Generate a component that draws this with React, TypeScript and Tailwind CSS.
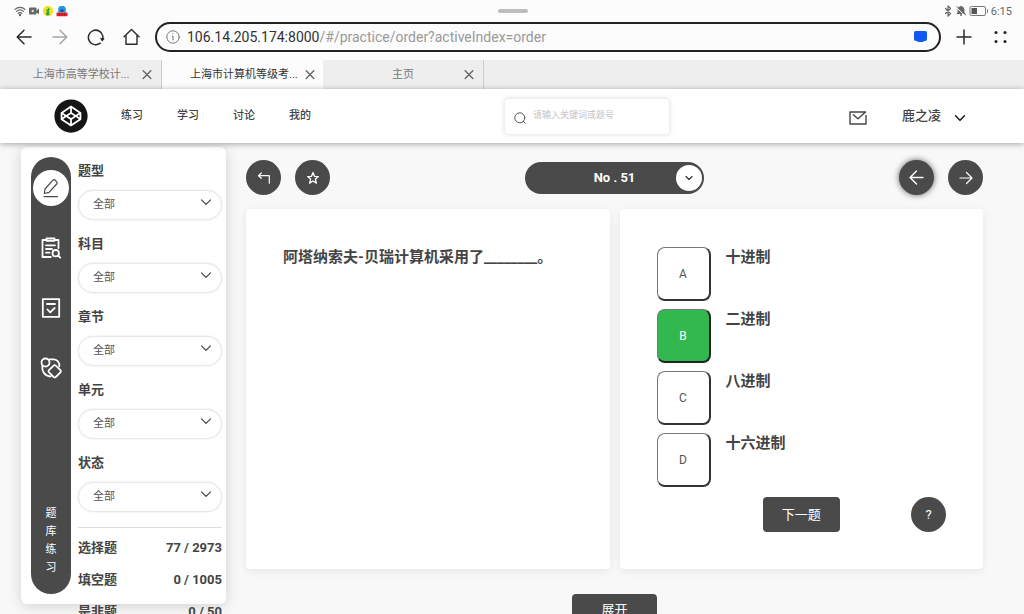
import React, { useState } from "react";
import { AiFillCodepenCircle } from "react-icons/ai";
import { BluetoothIcon } from "lucide-react";

type IconProps = { className?: string; children: React.ReactNode; box?: number; stroke?: number };

type Option = { key: string; text: string };

const tabs = [
  { title: "上海市高等学校计...", active: false },
  { title: "上海市计算机等级考...", active: true },
  { title: "主页", active: false },
];

const navItems = ["练习", "学习", "讨论", "我的"];

const filters = ["题型", "科目", "章节", "单元", "状态"];

const counts = [
  { name: "选择题", value: "77 / 2973" },
  { name: "填空题", value: "0 / 1005" },
  { name: "是非题", value: "0 / 50" },
];

const options: Option[] = [
  { key: "A", text: "十进制" },
  { key: "B", text: "二进制" },
  { key: "C", text: "八进制" },
  { key: "D", text: "十六进制" },
];

function Icon({ className, children, box = 24, stroke = 2 }: IconProps) {
  return (
    <svg
      className={className}
      viewBox={`0 0 ${box} ${box}`}
      fill="none"
      stroke="currentColor"
      strokeWidth={stroke}
      strokeLinecap="round"
      strokeLinejoin="round"
      aria-hidden="true"
    >
      {children}
    </svg>
  );
}

function Chevron({ className, stroke }: { className?: string; stroke?: number }) {
  return (
    <Icon className={className} box={12} stroke={stroke ?? 1.4}>
      <path d="M1.500 3.800 6 8.300l4.500-4.500" />
    </Icon>
  );
}

function StatusBar() {
  return (
    <div className="grid h-[22px] grid-cols-3 items-center pl-[14px] pr-3 text-[#666]">
      <div className="flex items-center gap-[2px]">
        <Icon className="h-3 w-3" box={12} stroke={1.2}>
          <path d="M1 4.4C3.8 1.8 8.2 1.8 11 4.4M2.6 6.4c2-1.8 4.800-1.800 6.800 0M4.200 8.300c1.100-.9 2.500-.9 3.600 0" />
          <circle cx="6" cy="10" r=".6" fill="currentColor" />
        </Icon>
        <svg className="h-3 w-3" viewBox="0 0 12 12" fill="#666" aria-hidden="true">
          <rect x="1" y="2.500" width="7.500" height="7" rx="1" />
          <path d="M8 6 11 3.500v5.500L8 7.500z" />
          <circle cx="4.700" cy="6" r="1.200" fill="#ddd" />
        </svg>
        <svg className="h-3 w-3" viewBox="0 0 12 12" aria-hidden="true">
          <circle cx="6" cy="6" r="5.200" fill="#f4e224" />
          <path d="M5.500 2.200 8 4.500 6.800 5.200l.5 3.200a1.700 1.700 0 1 1-1.500-1.300L3.500 5l2.600-.6z" fill="#24a148" />
        </svg>
        <svg className="h-3 w-3" viewBox="0 0 12 12" aria-hidden="true">
          <path d="M4 1h4l1.800 2v4.600H2.200V3z" fill="#2596e0" />
          <path d="M4.500 4.500h3v2.500h-3z" fill="#124f9c" />
          <rect x="0.500" y="7.400" width="11" height="3.800" rx=".6" fill="#e0202c" />
          <path d="M3 9.200h1.200M5.500 9.200h1.200M8 9.200h1.200" stroke="#7d1020" />
        </svg>
      </div>
      <span className="h-1 w-[30px] justify-self-center rounded-full bg-[#bdbdbd]" />
      <div className="flex items-center justify-end gap-px">
        <BluetoothIcon className="h-3 w-3" strokeWidth={2.5} />
        <svg className="h-3 w-3" viewBox="0 0 12 12" aria-hidden="true">
          <path d="M6 1c2 .4 3.400 1.800 3.400 3.800v2.400l1.200 1.800H1.400l1.200-1.800V4.800C2.600 2.800 4 1.400 6 1z" fill="#666" />
          <circle cx="6" cy="10" r="1" fill="#666" />
          <path d="M1 2.300 10.500 11" stroke="#fcfcfc" />
          <path d="M1.500 1.200 11 10.200" stroke="#666" />
        </svg>
        <svg className="mx-px h-[10px] w-5" viewBox="0 0 20 10" aria-hidden="true">
          <rect x="1" y=".5" width="15.500" height="9" rx="1.500" fill="none" stroke="#777" />
          <rect x="2.500" y="2" width="5.500" height="6" fill="#555" />
          <path d="M18.500 3.200v3.600" stroke="#777" />
        </svg>
        <span className="text-[11px] leading-none">6:15</span>
      </div>
    </div>
  );
}

function BrowserBar() {
  const btn = "flex h-[30px] w-9 items-center justify-center";
  return (
    <div className="flex items-center px-[6px] pb-2 text-[#2a2a2a]">
      <button type="button" aria-label="Back" className={btn}>
        <Icon className="h-4 w-4" box={16} stroke={1.500}>
          <path d="M15 8H1.500M8 1.200 1.200 8 8 14.800" />
        </Icon>
      </button>
      <button type="button" aria-label="Forward" className="flex h-[30px] w-9 items-center justify-center text-[#a5a5a5]">
        <Icon className="h-4 w-4" box={16} stroke={1.500}>
          <path d="M1 8h13.500M8 1.200 14.800 8 8 14.800" />
        </Icon>
      </button>
      <button type="button" aria-label="Reload" className={btn}>
        <Icon className="h-[18px] w-[18px]" box={18} stroke={1.500}>
          <path d="M13.200 15.200A7.300 7.300 0 1 1 15.800 7.800c.2 1.500 0 2.800-.6 4.200M16.600 10.800l-1.500 1.700-1-2" />
        </Icon>
      </button>
      <button type="button" aria-label="Home" className={btn}>
        <Icon className="h-[18px] w-[18px]" box={18} stroke={1.400}>
          <path d="M1 8.800 8.500 1.500 16 8.800M3 7.500v8.700h11V7.500" />
        </Icon>
      </button>
      <button
        type="button"
        className="mx-[5px] flex h-[30px] flex-1 items-center rounded-full border-2 border-[#222] pl-[9px] pr-3 text-left"
      >
        <Icon className="mr-[7px] h-[14px] w-[14px] text-[#777]" box={14} stroke={1}>
          <circle cx="7" cy="7" r="6.200" />
          <path d="M6.300 6H7v4M7 3.600v.2" />
        </Icon>
        <span className="flex-1 pt-px text-[14px] text-[#333]">
          106.14.205.174:8000<span className="text-[#999]">/#/practice/order?activeIndex=order</span>
        </span>
        <svg className="h-3 w-[13px]" viewBox="0 0 13 12" aria-hidden="true">
          <path d="M1.500 0h10a1.500 1.500 0 0 1 1.500 1.500V8a2 2 0 0 1-2 2H10L9 11H4L3 10H2a2 2 0 0 1-2-2V1.500A1.500 1.500 0 0 1 1.500 0z" fill="#1059f5" />
        </svg>
      </button>
      <button type="button" aria-label="New tab" className={btn}>
        <Icon className="h-4 w-4" box={16} stroke={1.500}>
          <path d="M8 1v14M1 8h14" />
        </Icon>
      </button>
      <button type="button" aria-label="Menu" className={btn}>
        <svg className="h-[14px] w-[14px]" viewBox="0 0 14 14" fill="#222" aria-hidden="true">
          <circle cx="3" cy="2.500" r="1.500" />
          <circle cx="12" cy="2.500" r="1.500" />
          <circle cx="3" cy="11.500" r="1.500" />
          <circle cx="12" cy="11.500" r="1.500" />
        </svg>
      </button>
    </div>
  );
}

function TabStrip() {
  return (
    <div className="flex h-[29px] bg-[#eee] pl-px">
      {tabs.map((tab) => (
        <div
          key={tab.title}
          className={
            tab.active
              ? "flex w-[161px] items-center bg-[#fcfcfc] pl-7 text-[#333]"
              : "flex w-[161px] items-center border-r border-[#ccc] pl-7 text-[#777]"
          }
        >
          <span className="flex-1 whitespace-nowrap pt-[2px] text-center text-[11px]">{tab.title}</span>
          <button type="button" aria-label="Close" className="flex h-7 w-7 items-center justify-center">
            <Icon className="h-[10px] w-[10px] text-[#666]" box={10} stroke={1.400}>
              <path d="M1.200.8l7.600 7.600M8.800.8 1.200 8.400" />
            </Icon>
          </button>
        </div>
      ))}
    </div>
  );
}

function Header() {
  return (
    <header className="relative z-10 flex h-[54px] shrink-0 items-center bg-white pl-[52px] pr-[58px] text-[#444] shadow-[0_1px_6px_rgba(0,0,0,0.35)]">
      <AiFillCodepenCircle className="h-[38px] w-[38px] text-[#151515]" />
      <nav className="ml-[31px] flex gap-[34px] text-[11px] font-medium">
        {navItems.map((item) => (
          <a key={item} href="#">
            {item}
          </a>
        ))}
      </nav>
      <div className="ml-auto mr-[179px] flex h-[37px] w-[166px] items-center rounded border border-[#eee] pl-[9px] shadow-[0_0_4px_rgba(0,0,0,0.12)]">
        <Icon className="mr-[7px] mt-[3px] h-3 w-3 shrink-0 text-[#555]" box={12} stroke={1}>
          <circle cx="5.800" cy="5.800" r="5" />
          <path d="M9.400 9.400 11.300 11.300" />
        </Icon>
        <input
          type="text"
          aria-label="搜索"
          placeholder="请输入关键词或题号"
          className="w-full min-w-0 bg-transparent text-[9px] outline-none placeholder:text-[#c4c4c8]"
        />
      </div>
      <button type="button" aria-label="消息" className="mr-[35px]">
        <svg
          className="mt-1 h-[14px] w-[18px]"
          viewBox="0 0 18 14"
          fill="none"
          stroke="currentColor"
          strokeWidth="1.400"
          strokeLinejoin="round"
          aria-hidden="true"
        >
          <path d="M17 4v9H1V1h16M4 3.500l5 4.300L16.500 1" />
        </svg>
      </button>
      <button type="button" className="flex items-center gap-[13px] text-[13px] font-medium">
        鹿之凌
        <Chevron className="mt-1 h-3 w-3 text-[#222]" stroke={1.600} />
      </button>
    </header>
  );
}

function Rail() {
  const item = "flex h-9 w-9 items-center justify-center rounded-full";
  return (
    <div className="flex w-10 flex-col items-center gap-6 rounded-full bg-[#4a4a4a] pb-[17px] pt-[13px] text-white">
      <button type="button" aria-label="练习" className="flex h-9 w-9 items-center justify-center rounded-full bg-white text-[#4a4a4a]">
        <Icon className="h-5 w-5" box={20} stroke={1.200}>
          <path d="M3.300 15.500 4 11 11.700 2.300a1.700 1.700 0 0 1 2.400-.1l1.500 1.400a1.700 1.700 0 0 1 .1 2.400L8 14.400zM3 18.700h13.500" />
        </Icon>
      </button>
      <button type="button" aria-label="查题" className={item}>
        <Icon className="h-[22px] w-[22px]" box={22} stroke={1.800}>
          <path d="M6 3H2.500v17h8.300M15 3h3.500v8M6.500 1.500h8v2.300h-8zM6 8.300h9M6 12h6M6 15.700h3.500" />
          <circle cx="15.700" cy="16.200" r="3.200" />
          <path d="M18.200 18.700l2 2" />
        </Icon>
      </button>
      <button type="button" aria-label="试卷" className={item}>
        <Icon className="h-5 w-5" box={20} stroke={1.800}>
          <path d="M1.800 1.200h16.400v17.600H1.800zM6 6h8M6.500 11.500l2.700 2.800 4.500-4.300" />
        </Icon>
      </button>
      <button type="button" aria-label="其他" className={item}>
        <Icon className="h-[22px] w-[22px]" box={22} stroke={1.800}>
          <circle cx="5.500" cy="5.500" r="4" />
          <path d="M9.300 2.300h4.500c3.500.2 6 3.300 5.500 7M2.300 9c-.6 5.500 2.500 10 8.300 10.500" />
          <path d="M13.600 8.600a1.500 1.500 0 0 1 2.200 0l4.600 4.600a1.500 1.500 0 0 1 0 2.200l-4.600 4.600a1.500 1.500 0 0 1-2.200 0L9 15.400a1.500 1.500 0 0 1 0-2.200z" />
        </Icon>
      </button>
      <div className="mt-auto flex w-3 flex-col text-center text-[11px] leading-[18px]">
        {"题库练习".split("").map((ch) => (
          <span key={ch}>{ch}</span>
        ))}
      </div>
    </div>
  );
}

function Sidebar() {
  return (
    <aside className="mb-[10px] mt-1 flex w-[205px] shrink-0 gap-[7px] rounded-md bg-white py-[10px] pl-[10px] pr-1 text-[#444] shadow-[0_2px_14px_rgba(0,0,0,0.16)]">
      <Rail />
      <div className="min-h-0 min-w-0 flex-1 pt-1">
        {filters.map((name) => (
          <label key={name} className="mb-[14px] block">
            <span className="mb-[9px] block text-[13px] font-bold leading-5">{name}</span>
            <span className="relative block">
              <select className="h-[30px] w-full appearance-none rounded-full border border-[#e9e9e9] bg-white pl-[14px] text-[11px] text-[#555] shadow-[0_0_2px_rgba(0,0,0,0.12)]">
                <option>全部</option>
              </select>
              <Chevron className="pointer-events-none absolute right-[10px] top-[6px] h-3 w-3 text-[#444]" stroke={1.200} />
            </span>
          </label>
        ))}
        <hr className="mt-[15px] border-[#ddd]" />
        <dl className="pt-1 text-[13px] font-bold leading-8">
          {counts.map((row) => (
            <div key={row.name} className="flex justify-between">
              <dt>{row.name}</dt>
              <dd>{row.value}</dd>
            </div>
          ))}
        </dl>
      </div>
    </aside>
  );
}

export default function App() {
  const [picked, setPicked] = useState<string>("B");

  const circle = "flex h-[35px] w-[35px] items-center justify-center rounded-full bg-[#4a4a4a] text-white";

  return (
    <div className="flex h-screen flex-col overflow-hidden bg-[#f8f8f8] font-[Roboto,'Noto_Sans_CJK_SC',sans-serif]">
      <div className="shrink-0 bg-[#fcfcfc]">
        <StatusBar />
        <BrowserBar />
        <TabStrip />
      </div>

      <Header />

      <div className="flex min-h-0 flex-1 pl-[21px]">
        <Sidebar />

        <main className="min-w-0 flex-1 pl-5 pr-[41px] pt-[17px]">
          {/* TOOLBAR */}
          <div className="flex items-center justify-between">
            <div className="flex gap-[14px]">
              <button type="button" aria-label="返回" className={circle}>
                <Icon className="h-[14px] w-[14px]" box={14} stroke={1.200}>
                  <path d="M4.300 2 1.500 4.700l2.800 2.600M1.800 4.700h10.500v7.500" />
                </Icon>
              </button>
              <button type="button" aria-label="收藏" className={circle}>
                <Icon className="h-[14px] w-[14px]" box={14} stroke={1.300}>
                  <path d="M7 1.500 8.500 5.300l3.900.3-3 2.500 1 4L7 10l-3.400 2.100 1-4-3-2.500 3.900-.3z" />
                </Icon>
              </button>
            </div>
            <button
              type="button"
              className="flex h-8 w-[179px] items-center rounded-full bg-[#4a4a4a] pr-[2px] text-white"
            >
              <span className="flex-1 pl-7 text-center text-[13px] font-bold">No . 51</span>
              <span className="flex h-[26px] w-[26px] items-center justify-center rounded-full bg-white text-[#333]">
                <Chevron className="h-2 w-2" stroke={1.800} />
              </span>
            </button>
            <div className="flex gap-[14px]">
              <button
                type="button"
                aria-label="上一题"
                className="flex h-[35px] w-[35px] items-center justify-center rounded-full bg-[#4a4a4a] text-white shadow-[0_0_6px_rgba(0,0,0,0.6)]"
              >
                <Icon className="h-[15px] w-[15px]" box={14} stroke={1.300}>
                  <path d="M13 7H1M7 1 1 7l6 6" />
                </Icon>
              </button>
              <button type="button" aria-label="后一题" className={circle}>
                <Icon className="h-[14px] w-[14px]" box={14} stroke={1.200}>
                  <path d="M1 7h12M7.500 1.500 13 7l-5.500 5.500" />
                </Icon>
              </button>
            </div>
          </div>

          {/* QUESTION */}
          <div className="mt-[14px] grid grid-cols-2 gap-[10px] text-[#444]">
            <section className="rounded bg-white px-[37px] pb-[37px] pt-[38px] shadow-[0_2px_8px_rgba(0,0,0,0.08)]">
              <p className="text-[15px] font-bold leading-5">阿塔纳索夫-贝瑞计算机采用了________。</p>
            </section>

            <section className="rounded bg-white px-[37px] pb-[37px] pt-[38px] shadow-[0_2px_8px_rgba(0,0,0,0.08)]">
              <ul className="space-y-2">
                {options.map((opt) => (
                  <li key={opt.key} className="flex gap-[15px]">
                    <button
                      type="button"
                      aria-label={opt.key + " " + opt.text}
                      onClick={() => setPicked(opt.key)}
                      className={
                        picked === opt.key
                          ? "h-[54px] w-[54px] rounded-lg border border-b-2 border-r-2 border-t-[#777] border-l-[#777] border-b-[#222] border-r-[#222] bg-[#31b950] text-[12px] text-white"
                          : "h-[54px] w-[54px] rounded-lg border border-b-2 border-r-2 border-t-[#777] border-l-[#777] border-b-[#333] border-r-[#333] bg-white text-[12px] text-[#555]"
                      }
                    >
                      {opt.key}
                    </button>
                    <span className="text-[15px] font-bold leading-5">{opt.text}</span>
                  </li>
                ))}
              </ul>
              <div className="mt-[10px] grid grid-cols-3">
                <button
                  type="button"
                  className="col-start-2 h-[35px] w-[77px] justify-self-center rounded bg-[#4a4a4a] text-[13px] text-white"
                >
                  下一题
                </button>
                <button
                  type="button"
                  aria-label="帮助"
                  className="h-[35px] w-[35px] justify-self-end rounded-full bg-[#4a4a4a] text-[13px] text-white"
                >
                  ?
                </button>
              </div>
            </section>
          </div>

          <div className="mt-[25px] flex justify-center">
            <button type="button" className="h-8 w-[85px] rounded bg-[#4a4a4a] text-[13px] text-white">
              展开
            </button>
          </div>
        </main>
      </div>
    </div>
  );
}
